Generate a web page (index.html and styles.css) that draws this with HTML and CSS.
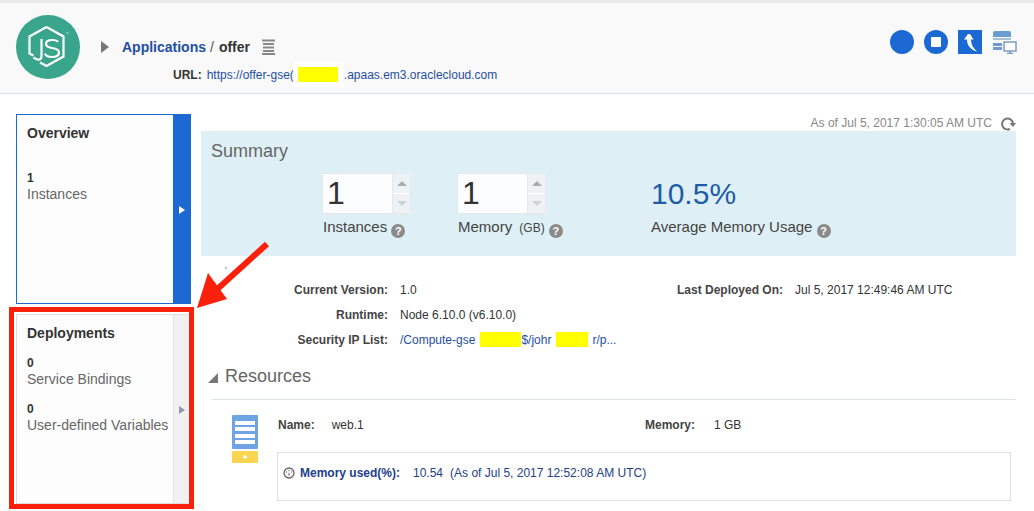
FILE: index.html
```html
<!DOCTYPE html>
<html>

<head>
  <title>offer</title>
  <link rel="stylesheet" href="styles.css">
</head>

<body>
  <header class="app-header">
    <svg class="logo" width="64" height="64" viewBox="0 0 64 64">
      <circle cx="32" cy="32" r="32" fill="#38a58c" />
      <path d="M30.500 12 L47.500 21.500 V41.500 L30.500 51 L24 47.500" fill="none" stroke="#fff" stroke-width="2.200" />
      <path d="M17.500 40.500 L13.500 38.500 V21.500 L30.500 12" fill="none" stroke="#fff" stroke-width="2.200" />
      <path d="M25.500 24 V41 Q25.500 46 20 44 L17.500 42.500" fill="none" stroke="#fff" stroke-width="2.200" />
      <path d="M42 27 Q41 25 36 25 Q30 25 30 29 Q30 32 36 33 Q43 34 43 37.500 Q43 42 36 42 Q30 42 29 38.500" fill="none" stroke="#fff" stroke-width="2.200" />
      <path d="M50 18 H53" stroke="#9fd6c8" />
    </svg>
    <div class="app-title">
      <div class="crumbs">
        <span class="crumb-arrow"></span>
        <a class="crumb-link">Applications</a>
        <span class="crumb-sep">/</span>
        <span class="crumb-current">offer</span>
        <svg class="menu-icon" width="15" height="16" viewBox="0 0 15 16">
          <path d="M1 1.500 H14 M2 5 H13 M2 8.500 H13 M2 12 H13 M1 15 H14" stroke="#888" stroke-width="2" />
        </svg>
      </div>
      <div class="url-line">
        <span class="url-label">URL:</span>
        <a class="url-link">https://offer-gse(</a><span class="redact-wrap"><span class="redact"></span></span><a class="url-link">.apaas.em3.oraclecloud.com</a>
      </div>
    </div>
    <div class="actions">
      <span class="btn-round"></span>
      <span class="btn-round"><span class="btn-stop"></span></span>
      <svg width="24" height="24" viewBox="0 0 24 24">
        <rect width="24" height="24" fill="#1c69d4" />
        <path d="M10 4 L6 9.500 H9 C9 15 12 19.500 19 21.500 C15 18 13 14.500 13 9.500 H15.500 L12 4 Z" fill="#fff" />
      </svg>
      <svg width="25" height="24" viewBox="0 0 25 24">
        <path d="M1 3 Q1 1 3 1 H17 Q19 1 19 3 V7 H1 Z" fill="#6b9bd3" />
        <path d="M1 8 H19 V10 H1 Z" fill="#a9c0da" />
        <path d="M1 13 H10 V16 H1 Z M1 17 H10 V20 H1 Z" fill="#6f9ac9" />
        <rect x="12" y="12" width="12" height="9" fill="#fff" stroke="#7c9cbf" stroke-width="1.500" />
        <path d="M18 21 V23 M15 23.500 H21" stroke="#7c9cbf" stroke-width="1.500" />
      </svg>
    </div>
  </header>

  <div class="page">
    <aside class="side">
      <section class="side-card side-card-active">
        <div class="side-body">
          <h3>Overview</h3>
          <div class="side-stats side-stats-wide">
            <div class="stat"><b>1</b><span>Instances</span></div>
          </div>
        </div>
        <div class="side-handle"><span class="handle-arrow"></span></div>
      </section>
      <section class="side-card">
        <div class="side-body">
          <h3>Deployments</h3>
          <div class="side-stats">
            <div class="stat"><b>0</b><span>Service Bindings</span></div>
            <div class="stat"><b>0</b><span>User-defined Variables</span></div>
          </div>
        </div>
        <div class="side-handle"><span class="handle-arrow"></span></div>
      </section>
    </aside>

    <main class="content">
      <div class="as-of">
        <span>As of Jul 5, 2017 1:30:05 AM UTC</span>
        <svg width="16" height="16" viewBox="0 0 16 16">
          <path d="M10 14 A5.500 5.500 0 1 1 13 8" fill="none" stroke="#777" stroke-width="2" />
          <path d="M9.500 8 H16 L13 12 Z" fill="#777" />
        </svg>
      </div>

      <section class="summary">
        <h2>Summary</h2>
        <div class="summary-row">
          <div class="metric">
            <div class="spinner">
              <div class="spinner-value">1</div>
              <div class="spinner-btns">
                <span class="spin-btn"><i class="tri-up"></i></span>
                <span class="spin-btn"><i class="tri-down"></i></span>
              </div>
            </div>
            <div class="metric-label">Instances <i class="help">?</i></div>
          </div>
          <div class="metric">
            <div class="spinner">
              <div class="spinner-value">1</div>
              <div class="spinner-btns">
                <span class="spin-btn"><i class="tri-up"></i></span>
                <span class="spin-btn"><i class="tri-down"></i></span>
              </div>
            </div>
            <div class="metric-label">Memory <small>(GB)</small> <i class="help">?</i></div>
          </div>
          <div class="metric metric-usage">
            <div class="usage-value">10.5%</div>
            <div class="metric-label">Average Memory Usage <i class="help">?</i></div>
          </div>
        </div>
      </section>

      <section class="details">
        <div class="detail-col">
          <div class="detail-row"><label>Current Version:</label><span>1.0</span></div>
          <div class="detail-row"><label>Runtime:</label><span>Node 6.10.0 (v6.10.0)</span></div>
          <div class="detail-row">
            <label>Security IP List:</label>
            <a class="url-link">/Compute-gse<span class="redact-inline r1"></span>$/johr<span class="redact-inline r2"></span>r/p...</a>
          </div>
        </div>
        <div class="detail-right">
          <label>Last Deployed On:</label><span>Jul 5, 2017 12:49:46 AM UTC</span>
        </div>
      </section>

      <section class="resources">
        <h2><span class="collapse-tri"></span>Resources</h2>
        <div class="resource">
          <svg class="server-icon" width="26" height="48" viewBox="0 0 26 48">
            <rect width="26" height="34" rx="1" fill="#6fa4e4" />
            <path d="M3 6 H23 V10 H3 Z M3 12 H23 V16 H3 Z M3 19 H23 V23 H3 Z M3 25 H23 V29 H3 Z" fill="#fff" />
            <rect y="36" width="26" height="12" rx="1" fill="#fad54f" />
            <circle cx="13" cy="42" r="1.800" fill="#fff" />
          </svg>
          <div class="resource-main">
            <div class="resource-head">
              <div class="res-name"><label>Name:</label><span>web.1</span></div>
              <div class="res-mem"><label>Memory:</label><span>1 GB</span></div>
            </div>
            <div class="memory-box">
              <svg width="12" height="12" viewBox="0 0 12 12">
                <circle cx="6" cy="6" r="5" fill="#f4f4f4" stroke="#666" stroke-width="1.300" />
                <path d="M3 5 H4 M5.500 3.500 H6.500 M8 5 H9 M6 6 L6 8.500" stroke="#666" />
              </svg>
              <b>Memory used(%):</b>
              <span class="mem-val">10.54</span>
              <span class="mem-val">(As of Jul 5, 2017 12:52:08 AM UTC)</span>
            </div>
          </div>
        </div>
      </section>
    </main>
  </div>

  <!-- annotation drawn over the screenshot -->
  <div class="red-box"></div>
  <svg class="red-arrow" width="80" height="70" viewBox="0 0 80 70">
    <path d="M72 3 L18 52" stroke="#f9210c" stroke-width="6" />
    <path d="M2 67 L13 32 L32 58 Z" fill="#f9210c" />
    <circle cx="31" cy="27" r="0.700" fill="#555" />
  </svg>
</body>

</html>
```

FILE: styles.css
```css
* {
  box-sizing: border-box;
}

html,
body {
  height: 511px;
  overflow: hidden;
}

body {
  margin: 0;
  position: relative;
  background: #fff;
  font-family: "Liberation Sans", Arial, sans-serif;
  font-size: 12px;
  color: #333;
}

h2,
h3 {
  margin: 0;
  font-weight: normal;
}

i {
  font-style: normal;
}

.url-link,
.crumb-link {
  color: #1f4fa3;
}

/* header */
.app-header {
  display: flex;
  align-items: flex-start;
  height: 94px;
  padding: 12px 18px 0 16px;
  background: #f9f9f9;
  border-top: 3px solid #e9e9e9;
  border-bottom: 1px solid #d9dfe6;
}

.logo {
  flex: none;
}

.app-title {
  margin-left: 21px;
  padding-top: 22px;
}

.crumbs {
  display: flex;
  align-items: center;
  height: 20px;
  font-size: 14px;
  font-weight: bold;
}

.crumb-arrow {
  width: 0;
  height: 0;
  margin-right: 13px;
  border-left: 8px solid #777;
  border-top: 6.500px solid transparent;
  border-bottom: 6.500px solid transparent;
}

.crumb-sep {
  margin: 0 5px 0 4px;
  font-weight: normal;
  color: #555;
}

.crumb-current {
  color: #333;
}

.menu-icon {
  margin-left: 11px;
}

.url-line {
  display: flex;
  align-items: center;
  height: 20px;
  margin-top: 8px;
  margin-left: 72px;
}

.url-label {
  margin-right: 5px;
  font-weight: bold;
}

.redact-wrap {
  display: inline-block;
  width: 50px;
  height: 25px;
  margin: -2px 1px 0 -1px;
  padding: 5px;
  background: #fff;
}

.redact {
  display: block;
  width: 40px;
  height: 15px;
  background: #ffff00;
}

.actions {
  display: flex;
  gap: 10px;
  align-items: center;
  margin-left: auto;
  margin-top: 15px;
  margin-right: -1px;
}

.btn-round {
  display: flex;
  align-items: center;
  justify-content: center;
  width: 24px;
  height: 24px;
  border-radius: 50%;
  background: #1c69d4;
}

.btn-stop {
  width: 10px;
  height: 10px;
  background: #fff;
  border-radius: 1px;
}

/* page */
.page {
  display: flex;
  padding: 20px 18px 0 16px;
}

.side {
  flex: none;
  width: 175px;
  display: flex;
  flex-direction: column;
  gap: 10px;
}

.side-card {
  display: flex;
  height: 190px;
  border: 1px solid #ddd;
  background: #fdfdfd;
}

.side-card-active {
  border-color: #1c69d4;
}

.side-body {
  flex: 1;
  padding: 10px 0 0 10px;
  white-space: nowrap;
}

.side-body h3 {
  font-size: 14px;
  font-weight: bold;
  line-height: 17px;
  color: #333;
}

.side-stats {
  margin-top: 14px;
}

.side-stats-wide {
  margin-top: 29px;
}

.stat {
  margin-bottom: 15px;
  line-height: 16px;
}

.stat b {
  display: block;
  line-height: 15px;
  color: #333;
}

.stat span {
  display: block;
  font-size: 14px;
  color: #666;
}

.side-handle {
  flex: none;
  display: flex;
  align-items: center;
  justify-content: center;
  width: 17px;
  border-left: 1px solid #e2e2e2;
  background: #f1f1f1;
}

.side-card-active .side-handle {
  border-left: 0;
  background: #1c69d4;
}

.handle-arrow {
  width: 0;
  height: 0;
  margin-top: 2px;
  border-left: 6px solid #8d98b3;
  border-top: 4.500px solid transparent;
  border-bottom: 4.500px solid transparent;
}

.side-card-active .handle-arrow {
  border-left-color: #fff;
}

/* right side */
.content {
  flex: 1;
  margin-left: 10px;
  min-width: 0;
}

.as-of {
  display: flex;
  justify-content: flex-end;
  align-items: center;
  gap: 8px;
  height: 17px;
  margin-right: 0;
  color: #888;
}

.summary {
  height: 125px;
  padding: 10px;
  background: #def0f5;
}

.summary h2 {
  font-size: 18px;
  line-height: 20px;
  color: #666;
}

.summary-row {
  display: flex;
  margin-top: 12px;
  margin-left: 111px;
}

.metric {
  width: 135px;
}

.metric-usage {
  width: auto;
  margin-left: 59px;
}

.metric-usage .metric-label {
  padding-left: 0;
}

.spinner {
  display: flex;
  width: 89px;
  height: 41px;
  border: 1px solid #e4e8ea;
  border-radius: 3px;
  overflow: hidden;
  background: #fff;
}

.spinner-value {
  flex: 1;
  padding-left: 4px;
  font-size: 32px;
  line-height: 38px;
  color: #333;
  background: #fbfdff;
}

.spinner-btns {
  display: flex;
  flex-direction: column;
  gap: 1px;
  width: 18px;
  background: #fff;
  border-left: 1px solid #e4e8ea;
}

.spin-btn {
  flex: 1;
  display: flex;
  align-items: center;
  justify-content: center;
  background: #eef2f5;
}

.tri-up,
.tri-down {
  width: 0;
  height: 0;
  border-left: 5px solid transparent;
  border-right: 5px solid transparent;
}

.tri-up {
  border-bottom: 5px solid #a8adb2;
}

.tri-down {
  border-top: 5px solid #ccd1d5;
}

.metric-label {
  margin-top: 4px;
  padding-left: 1px;
  font-size: 15px;
  line-height: 18px;
  color: #444;
}

.metric-label small {
  margin-left: 3px;
  font-size: 12px;
}

.help {
  display: inline-block;
  width: 14px;
  height: 14px;
  border-radius: 50%;
  background: #8a8a8a;
  color: #fff;
  font-size: 11px;
  font-weight: bold;
  line-height: 14px;
  text-align: center;
  vertical-align: -3px;
}

.usage-value {
  height: 41px;
  font-size: 30px;
  line-height: 41px;
  color: #1f5ca8;
}

/* details */
.details {
  display: flex;
  margin-top: 24px;
}

.detail-col {
  width: 476px;
}

.detail-row {
  display: flex;
  height: 25px;
  line-height: 20px;
}

label {
  font-weight: bold;
  color: #444;
}

.detail-row label {
  width: 199px;
  padding-right: 12px;
  text-align: right;
}

.redact-inline {
  display: inline-block;
  height: 15px;
  background: #ffff00;
  vertical-align: -3px;
}

.r1 {
  width: 41px;
  margin-left: 5px;
}

.r2 {
  width: 32px;
  margin: 0 4px 0 5px;
}

.detail-right {
  line-height: 20px;
}

.detail-right label {
  margin-right: 12px;
}

/* resources */
.resources {
  margin-top: 8px;
}

.resources h2 {
  display: flex;
  align-items: center;
  height: 26px;
  padding-left: 7px;
  font-size: 18px;
  color: #666;
}

.collapse-tri {
  width: 0;
  height: 0;
  margin-right: 7px;
  margin-top: 3px;
  border-left: 10px solid transparent;
  border-bottom: 10px solid #777;
}

.resource {
  display: flex;
  margin-left: 10px;
  margin-top: 10px;
  padding: 15px 5px 0 21px;
  border-top: 1px solid #dde3ec;
}

.server-icon {
  flex: none;
}

.resource-main {
  flex: 1;
  margin-left: 20px;
}

.resource-head {
  display: flex;
  height: 26px;
  line-height: 20px;
}

.res-name {
  width: 367px;
}

.res-name label {
  margin-right: 17px;
}

.res-mem label {
  margin-right: 19px;
}

.memory-box {
  display: flex;
  align-items: center;
  gap: 5px;
  height: 49px;
  margin-top: 11px;
  margin-left: -1px;
  padding: 0 0 8px 5px;
  border: 1px solid #dfdfdf;
}

.memory-box b {
  margin-right: 8px;
  color: #23408a;
}

.mem-val {
  margin-right: 2px;
  color: #23408a;
}

/* annotation */
.red-box {
  position: absolute;
  left: 9px;
  top: 307px;
  width: 185px;
  height: 202px;
  border: 5px solid #f9210c;
}

.red-arrow {
  position: absolute;
  left: 195px;
  top: 241px;
}
```
